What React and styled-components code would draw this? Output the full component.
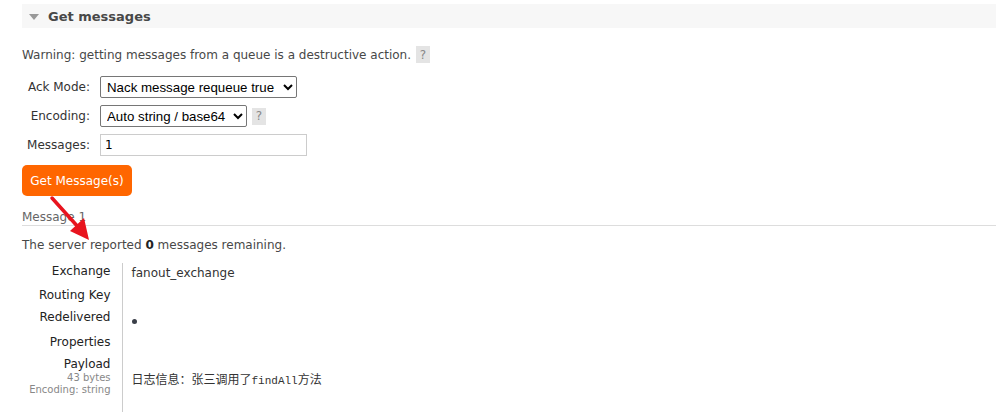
import styled, { createGlobalStyle } from "styled-components";

const GlobalStyle = createGlobalStyle`
    body {
        margin: 0;
        background: #fff;
        font-family: "DejaVu Sans", Verdana, sans-serif;
        font-size: 12px;
        color: #484848;
    }
`

const Page = styled.div`
    position: relative;
    padding: 4px 0 0 22px;
    height: 409px;
    overflow: hidden;
`
const SectionHeader = styled.div`
    display: flex;
    align-items: center;
    gap: 9px;
    height: 24px;
    background: #f7f7f7;
    padding-left: 7px;
    font-weight: bold;
    font-size: 13px;
    color: #484848;
`
const Triangle = styled.span`
    width: 0;
    height: 0;
    border-left: 5px solid transparent;
    border-right: 5px solid transparent;
    border-top: 6px solid #999;
    margin-top: 1px;
`
const Warning = styled.p`
    margin: 18px 0 0;
    line-height: 16px;
    display: flex;
    align-items: center;
    gap: 5px;
`
const Help = styled.span`
    display: inline-flex;
    align-items: center;
    justify-content: center;
    width: 14px;
    height: 17px;
    background: #e4e4e4;
    color: #888;
    font-size: 12px;
`
const FormGrid = styled.div`
    display: grid;
    grid-template-columns: 68px auto;
    column-gap: 10px;
    row-gap: 7px;
    align-items: center;
    margin-top: 13px;
`
const Label = styled.label`
    text-align: right;
    color: #333;
`
const FieldRow = styled.div`
    display: flex;
    align-items: center;
    gap: 5px;
`
const Select = styled.select`
    height: 22px;
    font-family: Arial, "Liberation Sans", sans-serif;
    font-size: 13.3px;
    color: #000;
    border: 1px solid #767676;
    border-radius: 2px;
    background: #fff;
    padding: 0 2px;
    width: ${p => p.w}px;
`
const TextInput = styled.input`
    width: 207px;
    height: 22px;
    box-sizing: border-box;
    border: 1px solid #ccc;
    font-family: "DejaVu Sans", sans-serif;
    font-size: 12px;
    padding: 0 4px;
    color: #000;
`
const SubmitButton = styled.button`
    margin-top: 9px;
    background: #ff6600;
    color: #fff;
    border: none;
    border-radius: 5px;
    width: 110px;
    height: 31px;
    font-family: "DejaVu Sans", sans-serif;
    font-size: 12px;
    cursor: pointer;
`
const MessageTitle = styled.h3`
    margin: 14px 0 0;
    font-size: 12px;
    font-weight: normal;
    color: #666;
    padding-bottom: 1px;
    border-bottom: 1px solid #ddd;
`
const Remaining = styled.p`
    margin: 12px 0 0;
    b { font-weight: bold; color: #222; }
`
const Details = styled.table`
    border-collapse: collapse;
    margin-top: 11px;
`
const Th = styled.th`
    width: 100px;
    box-sizing: border-box;
    white-space: nowrap;
    text-align: right;
    vertical-align: top;
    font-weight: normal;
    color: #222;
    padding: 1px 11px 0 0;
    border-right: 1px solid #ccc;
    height: ${p => p.h}px;
    line-height: 15px;
`
const Td = styled.td`
    vertical-align: top;
    padding: ${p => p.pt || 3}px 0 0 9px;
    line-height: 15px;
    color: #333;
`
const Dot = styled.span`
    display: block;
    width: 5px;
    height: 5px;
    border-radius: 50%;
    background: #3a3f48;
`
const Small = styled.div`
    font-size: 10px;
    color: #888;
    line-height: 12px;
`
const Payload = styled.span`
    font-family: "Noto Sans CJK SC", sans-serif;
    font-size: 12px;
    color: #333;
    code {
        font-family: "Liberation Mono", monospace;
        font-size: 11px;
    }
`
const Arrow = styled.svg`
    position: absolute;
    left: 46px;
    top: 194px;
`

function App() {
    return (
        <Page>
            <GlobalStyle />
            <SectionHeader>
                <Triangle />
                Get messages
            </SectionHeader>
            <Warning>
                Warning: getting messages from a queue is a destructive action.
                <Help>?</Help>
            </Warning>
            <FormGrid>
                <Label>Ack Mode:</Label>
                <FieldRow>
                    <Select w={197} defaultValue="nack">
                        <option value="nack">Nack message requeue true</option>
                    </Select>
                </FieldRow>
                <Label>Encoding:</Label>
                <FieldRow>
                    <Select w={147} defaultValue="auto">
                        <option value="auto">Auto string / base64</option>
                    </Select>
                    <Help>?</Help>
                </FieldRow>
                <Label>Messages:</Label>
                <FieldRow>
                    <TextInput defaultValue="1" />
                </FieldRow>
            </FormGrid>
            <SubmitButton>Get Message(s)</SubmitButton>
            <MessageTitle>Message 1</MessageTitle>
            <Remaining>The server reported <b>0</b> messages remaining.</Remaining>
            <Details>
                <tbody>
                    <tr><Th h={24}>Exchange</Th><Td>fanout_exchange</Td></tr>
                    <tr><Th h={22}>Routing Key</Th><Td></Td></tr>
                    <tr><Th h={25}>Redelivered</Th><Td pt={10}><Dot /></Td></tr>
                    <tr><Th h={22}>Properties</Th><Td></Td></tr>
                    <tr>
                        <Th h={56}>
                            Payload
                            <Small>43 bytes</Small>
                            <Small>Encoding: string</Small>
                        </Th>
                        <Td pt={15}>
                            <Payload>日志信息：张三调用了<code>findAll</code>方法</Payload>
                        </Td>
                    </tr>
                </tbody>
            </Details>
            <Arrow width="50" height="50" viewBox="0 0 50 50">
                <line x1="6" y1="4" x2="33" y2="34" stroke="#e8141e" strokeWidth="3.5" strokeLinecap="round" />
                <polygon points="43,46 24,37 38,24" fill="#e8141e" />
            </Arrow>
        </Page>
    )
}

export default App
